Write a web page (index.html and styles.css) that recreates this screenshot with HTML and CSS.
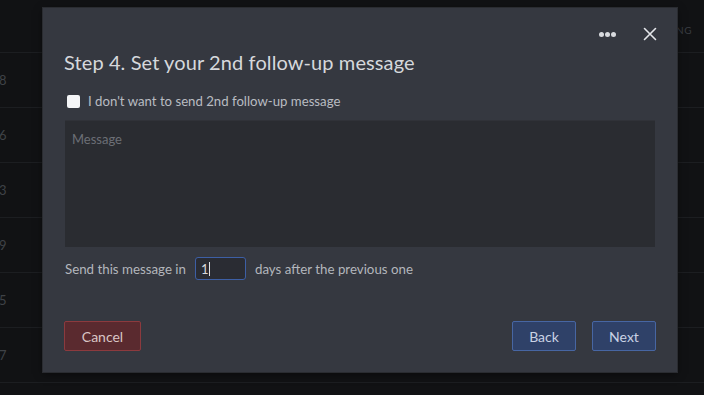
FILE: index.html
```html
<!DOCTYPE html>
<html>
<head>
<meta charset="utf-8">
<link rel="stylesheet" href="styles.css">
</head>
<body>
<div class="page">
  <div class="table">
    <div class="thead"><span class="th-right">NG</span></div>
    <div class="row"><span>8</span></div>
    <div class="row"><span>6</span></div>
    <div class="row"><span>3</span></div>
    <div class="row"><span>9</span></div>
    <div class="row"><span>5</span></div>
    <div class="row"><span>7</span></div>
  </div>
  <div class="modal">
    <div class="modal-top">
      <span class="dots"><i></i><i></i><i></i></span>
      <svg class="close" width="14" height="14" viewBox="0 0 14 14"><path d="M1.5 1.5 L12.5 12.5 M12.5 1.5 L1.5 12.5" stroke="#e4e6ea" stroke-width="1.6" stroke-linecap="round"/></svg>
    </div>
    <h1 class="title">Step 4. Set your 2nd follow-up message</h1>
    <label class="check"><span class="box"></span>I don't want to send 2nd follow-up message</label>
    <div class="textarea">Message</div>
    <div class="days">
      <span>Send this message in</span>
      <span class="input">1<span class="caret"></span></span>
      <span>days after the previous one</span>
    </div>
    <div class="footer">
      <button class="btn cancel">Cancel</button>
      <div class="right">
        <button class="btn blue">Back</button>
        <button class="btn blue">Next</button>
      </div>
    </div>
  </div>
</div>
</body>
</html>
```
FILE: styles.css
```css
* { box-sizing: border-box; }
html, body { margin: 0; padding: 0; }
body {
  width: 704px; height: 395px; overflow: hidden;
  background: #111214;
  font-family: "Lato", "Noto Sans", sans-serif;
}
.page { position: relative; width: 704px; height: 395px; }
.table { display: flex; flex-direction: column; }
.thead {
  height: 53px; border-bottom: 1px solid #1c1e21;
  display: flex; justify-content: flex-end; align-items: center;
  padding-right: 12px; padding-top: 7px;
}
.th-right { color: #3a3d42; font-size: 10px; letter-spacing: 0.5px; }
.row {
  height: 55px; border-bottom: 1px solid #1c1e21;
  display: flex; align-items: center;
  color: #3f4247; font-size: 13px;
}
.row span { margin-left: -1px; }
.modal {
  position: absolute; left: 43px; top: 8px;
  width: 634px; height: 364px;
  background: #353840;
  box-shadow: 0 0 0 1px #2a2c31, 0 2px 8px rgba(0,0,0,0.5);
  padding: 0 21px;
  display: flex; flex-direction: column;
}
.modal-top {
  height: 33px; display: flex; justify-content: flex-end; align-items: flex-end;
  gap: 27px; margin-right: -1px;
}
.dots { display: flex; gap: 1px; margin-bottom: 4px; }
.dots i { width: 5px; height: 5px; border-radius: 50%; background: #d8dade; display: block; }
.title {
  margin: 9px 0 0 0; font-weight: 400; font-size: 20px; color: #d6d8dc;
  line-height: 24px; letter-spacing: 0.1px;
}
.check {
  display: flex; align-items: center; gap: 8px; margin: 19px 0 0 3px;
  color: #b9bcc2; font-size: 13.2px; line-height: 16px;
}
.box { width: 13px; height: 13px; border-radius: 2px; background: #f4f5f7; display: block; }
.textarea {
  margin: 11px 1px 0 1px; height: 127px; background: #2a2c31;
  color: #6c6f76; font-size: 13px; padding: 10px 7px;
  border-top: 1px solid #303238;
}
.days {
  display: flex; align-items: center; gap: 9px; margin-top: 10px; padding-left: 1px;
  color: #b3b6bc; font-size: 13.3px;
}
.input {
  width: 51px; height: 23px; border: 1.5px solid #3d5fa5; border-radius: 3px;
  background: #2a2c33; color: #d8dade; font-size: 13px;
  display: flex; align-items: center; padding-left: 5px;
}
.caret { width: 1px; height: 14px; background: #e0e2e6; margin-left: 1px; }
.footer {
  margin-top: 41px; display: flex; justify-content: space-between;
}
.right { display: flex; gap: 16px; }
.btn {
  height: 30px; font-family: inherit; font-size: 14px; border-radius: 2px;
  padding: 0; cursor: pointer;
}
.cancel {
  width: 77px; background: #5a2a2f; border: 1px solid #8c3a3e; color: #d9c5c5;
}
.blue { width: 64px; background: #2f4168; border: 1px solid #4766a3; color: #c9d2e4; }
```
